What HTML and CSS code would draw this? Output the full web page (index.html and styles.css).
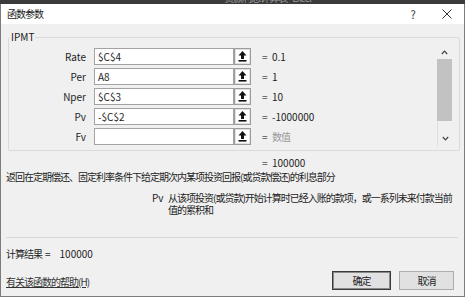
FILE: index.html
```html
<!DOCTYPE html>
<html lang="zh-CN">
  <head>
    <meta charset="UTF-8" />
    <meta name="viewport" content="width=device-width, initial-scale=1.0" />
    <title>函数参数</title>
    <link rel="stylesheet" href="styles.css">
  </head>
  <body>
    <!-- 背后 Excel 窗口的标题栏（只露出一点） -->
    <div class="appbar"><span class="appbar-text">贷款利息计算表 - Excel</span></div>

    <div class="dialog">
      <div class="titlebar">
        <span class="title">函数参数</span>
        <span class="help-btn">?</span>
        <span class="close-btn">
          <svg width="10" height="10" viewBox="0 0 10 10"><path d="M0.5 0.5L9.5 9.5M9.5 0.5L0.5 9.5" stroke="#333" stroke-width="1" fill="none"/></svg>
        </span>
      </div>

      <div class="content">
        <fieldset class="group">
          <legend>IPMT</legend>
          <div class="group-body">
            <div class="args">
              <div class="arg">
                <label>Rate</label>
                <input type="text" value="$C$4" />
                <button class="pick"><svg width="9" height="11" viewBox="0 0 9 11"><path d="M4.5 0L8.5 4.5H6V8H3V4.5H0.5Z" fill="#111"/><rect x="0.5" y="9" width="8" height="1.6" fill="#111"/></svg></button>
                <span class="eq">=</span><span class="val">0.1</span>
              </div>
              <div class="arg">
                <label>Per</label>
                <input type="text" value="A8" />
                <button class="pick"><svg width="9" height="11" viewBox="0 0 9 11"><path d="M4.5 0L8.5 4.5H6V8H3V4.5H0.5Z" fill="#111"/><rect x="0.5" y="9" width="8" height="1.6" fill="#111"/></svg></button>
                <span class="eq">=</span><span class="val">1</span>
              </div>
              <div class="arg">
                <label>Nper</label>
                <input type="text" value="$C$3" />
                <button class="pick"><svg width="9" height="11" viewBox="0 0 9 11"><path d="M4.5 0L8.5 4.5H6V8H3V4.5H0.5Z" fill="#111"/><rect x="0.5" y="9" width="8" height="1.6" fill="#111"/></svg></button>
                <span class="eq">=</span><span class="val">10</span>
              </div>
              <div class="arg">
                <label>Pv</label>
                <input type="text" value="-$C$2" />
                <button class="pick"><svg width="9" height="11" viewBox="0 0 9 11"><path d="M4.5 0L8.5 4.5H6V8H3V4.5H0.5Z" fill="#111"/><rect x="0.5" y="9" width="8" height="1.6" fill="#111"/></svg></button>
                <span class="eq">=</span><span class="val">-1000000</span>
              </div>
              <div class="arg">
                <label>Fv</label>
                <input type="text" value="" />
                <button class="pick"><svg width="9" height="11" viewBox="0 0 9 11"><path d="M4.5 0L8.5 4.5H6V8H3V4.5H0.5Z" fill="#111"/><rect x="0.5" y="9" width="8" height="1.6" fill="#111"/></svg></button>
                <span class="eq">=</span><span class="val hint">数值</span>
              </div>
            </div>

            <!-- 参数列表的滚动条 -->
            <div class="scroll">
              <div class="scroll-up"><svg width="7" height="5" viewBox="0 0 7 5"><path d="M0.8 4L3.5 1.2L6.2 4" stroke="#444" stroke-width="1.2" fill="none"/></svg></div>
              <div class="thumb"></div>
              <div class="scroll-lower">
                <div class="track"></div>
                <div class="scroll-down"><svg width="7" height="5" viewBox="0 0 7 5"><path d="M0.8 1L3.5 3.8L6.2 1" stroke="#444" stroke-width="1.2" fill="none"/></svg></div>
              </div>
            </div>
          </div>
        </fieldset>

        <div class="total"><span class="eq">=</span><span>100000</span></div>

        <p class="desc">返回在定期偿还、固定利率条件下给定期次内某项投资回报(或贷款偿还)的利息部分</p>

        <div class="arg-help">
          <span class="arg-name">Pv</span>
          <p>从该项投资(或贷款)开始计算时已经入账的款项，或一系列未来付款当前值的累积和</p>
        </div>

        <hr class="sep" />

        <div class="result"><span>计算结果</span><span class="result-eq">=</span><span class="result-val">100000</span></div>

        <div class="footer">
          <a class="link" href="#">有关该函数的帮助(H)</a>
          <div class="buttons">
            <button class="btn default">确定</button>
            <button class="btn cancel">取消</button>
          </div>
        </div>
      </div>
    </div>
  </body>
</html>
```

FILE: styles.css
```css
body {
  margin: 0;
  width: 465px;
  height: 297px;
  overflow: hidden;
  background-color: #3b3b3b;
  font-family: "Noto Sans CJK SC", "Noto Sans", sans-serif;
  font-size: 10px;
  line-height: 12px;
  color: #1e1e1e;
}

.appbar {
  height: 4px;
  overflow: hidden;
  text-align: center;
  background-color: #3b3b3b;
}

.appbar-text {
  display: block;
  margin-top: -8px;
  padding-left: 70px;
  color: #9a9a9a;
  letter-spacing: -1px;
}

.dialog {
  background-color: #f0f0f0;
  border-left: 1px solid #7c7c7c;
  border-right: 1px solid #7c7c7c;
  border-bottom: 1px solid #7c7c7c;
}

/* 标题栏 */
.titlebar {
  height: 20px;
  display: flex;
  align-items: center;
  background-color: #ffffff;
}

.title {
  padding-left: 6px;
  letter-spacing: -1px;
  color: #222;
}

.help-btn {
  margin-left: auto;
  width: 34px;
  text-align: center;
  font-size: 11px;
  color: #333;
}

.close-btn {
  width: 34px;
  display: flex;
  justify-content: center;
}

.content {
  padding: 0 4px 6px 5px;
}

/* 参数分组框 */
.group {
  margin: 7px 0 0 2px;
  padding: 0 0 4px 0;
  border: 1px solid #dadada;
  border-radius: 2px;
}

.group legend {
  margin-left: 1px;
  padding: 0 1px;
  line-height: 12px;
  color: #222;
}

.group-body {
  display: flex;
  padding-top: 5px;
}

.args {
  display: flex;
  flex-direction: column;
  gap: 3px;
}

.arg {
  display: flex;
  align-items: center;
  height: 17px;
}

.arg label {
  width: 77px;
  text-align: right;
  color: #222;
}

.arg input {
  box-sizing: border-box;
  width: 140px;
  height: 17px;
  margin: 0 0 0 8px;
  padding: 0 3px;
  border: 1px solid #a3a3a3;
  background-color: #fff;
  font-family: "Noto Sans CJK SC", "Noto Sans", sans-serif;
  font-size: 10px;
  color: #1e1e1e;
}

.pick {
  box-sizing: border-box;
  width: 17px;
  height: 17px;
  margin: 0;
  padding: 0;
  display: flex;
  align-items: center;
  justify-content: center;
  border: 1px solid #9c9c9c;
  background-color: #fff;
  box-shadow: inset 0 0 0 1px #e2e2e2;
}

.eq {
  width: 10px;
  margin-left: 11px;
  color: #555;
}

.val {
  color: #222;
}

.hint {
  color: #9a9a9a;
  letter-spacing: -1px;
}

/* 滚动条 */
.scroll {
  margin: -2px 7px 0 auto;
  width: 15px;
  height: 100px;
  display: flex;
  flex-direction: column;
}

.scroll-up {
  height: 13px;
  display: flex;
  align-items: center;
  justify-content: center;
}

.thumb {
  height: 62px;
  background-color: #c2c2c2;
}

.scroll-lower {
  flex: 1;
  display: flex;
  flex-direction: column;
  border-left: 1px solid #dedede;
}

.track {
  flex: 1;
}

.scroll-down {
  height: 15px;
  display: flex;
  align-items: center;
  justify-content: center;
}

/* 结果与说明 */
.total {
  margin-top: 6px;
  padding-left: 256px;
  display: flex;
}

.total .eq {
  margin-left: 0;
}

.desc {
  margin: 2px 0 0 0;
  letter-spacing: -1px;
  color: #222;
}

.arg-help {
  margin-top: 9px;
  padding-left: 146px;
  display: flex;
}

.arg-name {
  width: 16px;
  flex-shrink: 0;
  color: #222;
}

.arg-help p {
  margin: 0;
  width: 290px;
  letter-spacing: -1px;
  color: #222;
}

.sep {
  margin: 21px 2px 0 0;
  border: none;
  border-top: 1px solid #d9d9d9;
}

.result {
  margin-top: 10px;
  display: flex;
  letter-spacing: -1px;
}

.result-eq {
  margin-left: 3px;
}

.result-val {
  margin-left: 10px;
  letter-spacing: 0;
}

.footer {
  margin-top: 11px;
  padding-right: 6px;
  display: flex;
  align-items: center;
  justify-content: space-between;
}

.link {
  padding-top: 2px;
  color: #333;
  letter-spacing: -1px;
  text-decoration: underline;
}

.buttons {
  display: flex;
  gap: 8px;
}

.btn {
  box-sizing: border-box;
  height: 19px;
  padding: 0;
  border: 1px solid #adadad;
  background-color: #e1e1e1;
  font-family: "Noto Sans CJK SC", "Noto Sans", sans-serif;
  font-size: 10px;
  letter-spacing: -1px;
  color: #222;
}

.btn.default {
  width: 59px;
  border-color: #3a3a3a;
  box-shadow: inset 0 0 0 1px #8a8a8a;
}

.btn.cancel {
  width: 55px;
}
```
